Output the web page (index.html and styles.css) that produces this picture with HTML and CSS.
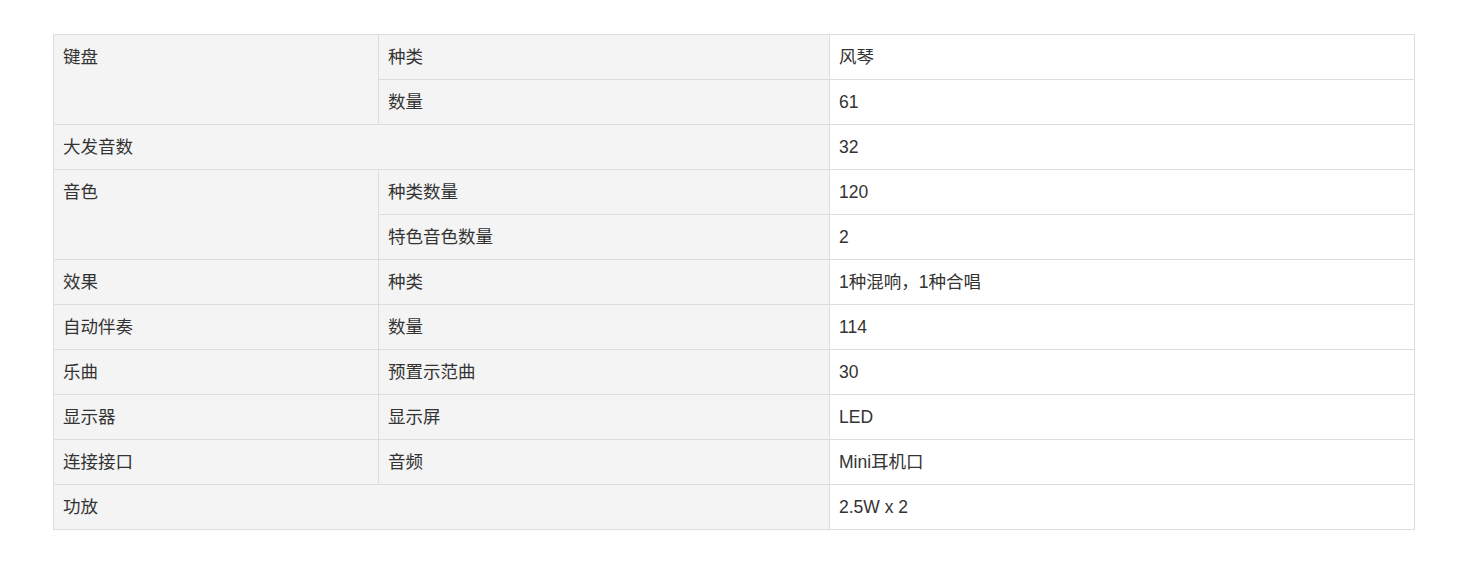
FILE: index.html
```html
<!DOCTYPE html>
<html lang="zh-CN">
<head>
<meta charset="utf-8">
<title>参数</title>
<link rel="stylesheet" href="styles.css">
</head>
<body>
<div class="page">
  <table class="specs">
    <colgroup>
      <col class="c1">
      <col class="c2">
      <col class="c3">
    </colgroup>
    <tbody>
      <tr><td class="lbl" rowspan="2">键盘</td><td class="lbl">种类</td><td class="val">风琴</td></tr>
      <tr><td class="lbl">数量</td><td class="val">61</td></tr>
      <tr><td class="lbl" colspan="2">大发音数</td><td class="val">32</td></tr>
      <tr><td class="lbl" rowspan="2">音色</td><td class="lbl">种类数量</td><td class="val">120</td></tr>
      <tr><td class="lbl">特色音色数量</td><td class="val">2</td></tr>
      <tr><td class="lbl">效果</td><td class="lbl">种类</td><td class="val">1种混响，1种合唱</td></tr>
      <tr><td class="lbl">自动伴奏</td><td class="lbl">数量</td><td class="val">114</td></tr>
      <tr><td class="lbl">乐曲</td><td class="lbl">预置示范曲</td><td class="val">30</td></tr>
      <tr><td class="lbl">显示器</td><td class="lbl">显示屏</td><td class="val">LED</td></tr>
      <tr><td class="lbl">连接接口</td><td class="lbl">音频</td><td class="val">Mini耳机口</td></tr>
      <tr><td class="lbl" colspan="2">功放</td><td class="val">2.5W x 2</td></tr>
    </tbody>
  </table>
</div>
</body>
</html>
```
FILE: styles.css
```css
html, body {
  margin: 0;
  padding: 0;
  background: #ffffff;
}
.page {
  padding: 34px 53px;
  font-family: "Liberation Sans", "Noto Sans CJK SC", sans-serif;
  font-size: 17.5px;
  color: #333333;
}
.specs {
  width: 1361px;
  border-collapse: collapse;
  table-layout: fixed;
}
.c1 { width: 325px; }
.c2 { width: 451px; }
.c3 { width: 585px; }
.specs td {
  border: 1px solid #dddddd;
  padding: 10px 10px 10px 9px;
  line-height: 24px;
  height: 24px;
  vertical-align: top;
  text-align: left;
}
.specs .lbl {
  background: #f4f4f4;
}
.specs .val {
  background: #ffffff;
}
```
